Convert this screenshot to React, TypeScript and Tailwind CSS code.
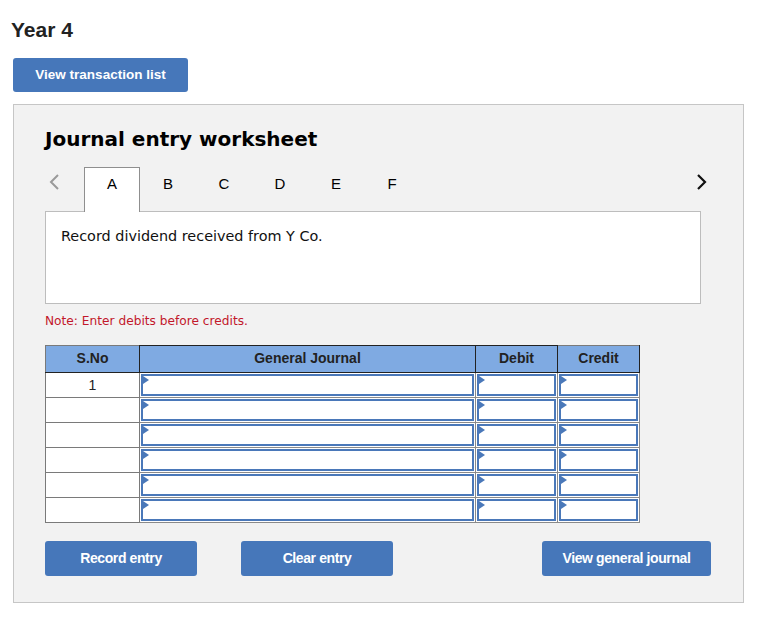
import React from 'react';

const tabs = ['A', 'B', 'C', 'D', 'E', 'F'];
const rows = [1, 2, 3, 4, 5, 6];

function Flag() {
  return (
    <svg className="absolute left-0 top-0" width="6" height="8" viewBox="0 0 6 8">
      <path d="M0 0 L6 4 L0 8 Z" fill="#4a78b9" />
    </svg>
  );
}

function InputCell({ width }: { width: string }) {
  return (
    <td className={`${width} h-[25px] p-0 border border-[#8a8a8a] bg-white`}>
      <div className="relative h-[22px] mx-[1px] border-2 border-[#4a78b9] bg-white">
        <Flag />
      </div>
    </td>
  );
}

export default function App() {
  return (
    <div className="w-[776px] h-[620px] bg-white pt-[17px] font-['Liberation_Sans',Arial,sans-serif]">
      <h1 className="pl-[11px] text-[21px] leading-[26px] font-bold text-[#222]">Year 4</h1>

      <button className="ml-[13px] mt-[15px] w-[175px] h-[34px] rounded-[3px] bg-[#4677ba] text-white text-[13.5px] font-bold">
        View transaction list
      </button>

      <div className="ml-[13px] mt-[12px] w-[731px] h-[499px] border border-[#c6c6c6] bg-[#f2f2f2] pl-[31px] pt-[21px]">
        <h2 className="text-[20px] leading-[26px] font-bold text-black font-['DejaVu_Sans',Verdana,sans-serif]">
          Journal entry worksheet
        </h2>

        <div className="mt-[15px] flex items-end h-[44px] w-[667px]">
          <span className="w-[39px] h-[44px] flex items-start pt-[6px] pl-[3px]">
            <svg width="12" height="18" viewBox="0 0 12 18">
              <path d="M10 2 L3 9 L10 16" fill="none" stroke="#9a9a9a" strokeWidth="2" />
            </svg>
          </span>
          {tabs.map((t, i) => (
            <div
              key={t}
              className={
                i === 0
                  ? 'w-[56px] h-[45px] -mb-[1px] relative z-10 border border-[#8f8f8f] border-b-0 bg-white flex justify-center pt-[5px] text-[15px] text-black'
                  : 'w-[56px] h-[44px] flex justify-center pt-[6px] text-[15px] text-black'
              }
            >
              {t}
            </div>
          ))}
          <span className="ml-auto w-[16px] h-[44px] flex items-start pt-[6px]">
            <svg width="12" height="18" viewBox="0 0 12 18">
              <path d="M2 2 L9 9 L2 16" fill="none" stroke="#111" strokeWidth="2.2" />
            </svg>
          </span>
        </div>

        <div className="w-[656px] h-[93px] border border-[#bdbdbd] bg-white pl-[15px] pt-[15px] text-[14.4px] leading-[18px] text-[#111] font-['DejaVu_Sans',Verdana,sans-serif]">
          Record dividend received from Y Co.
        </div>

        <p className="mt-[9px] text-[12.2px] leading-[16px] text-[#c2182b] font-['DejaVu_Sans',Verdana,sans-serif]">
          Note: Enter debits before credits.
        </p>

        <table className="mt-[16px] border-collapse border border-[#7a7a7a] text-[14px]">
          <thead>
            <tr className="h-[27px] bg-[#7faae2] text-[#222] font-bold">
              <th className="w-[94px] border border-[#7a7a7a] border-r-[#222] border-b-[#222] font-bold pb-[2px]">S.No</th>
              <th className="w-[336px] border border-[#222] font-bold pb-[2px]">General Journal</th>
              <th className="w-[82px] border border-[#222] font-bold pb-[2px]">Debit</th>
              <th className="w-[82px] border border-[#222] border-t-[#7a7a7a] font-bold pb-[2px]">Credit</th>
            </tr>
          </thead>
          <tbody>
            {rows.map((r) => (
              <tr key={r}>
                <td className="w-[94px] h-[25px] p-0 border border-[#7a7a7a] bg-white text-center text-[14px] text-[#222] align-top pt-[2px]">
                  {r === 1 ? '1' : ''}
                </td>
                <InputCell width="w-[336px]" />
                <InputCell width="w-[82px]" />
                <InputCell width="w-[82px]" />
              </tr>
            ))}
          </tbody>
        </table>

        <div className="mt-[18px] flex w-[666px]">
          <button className="w-[152px] h-[35px] rounded-[3px] bg-[#4677ba] text-white text-[14px] font-bold tracking-[-0.4px]">
            Record entry
          </button>
          <button className="ml-[44px] w-[152px] h-[35px] rounded-[3px] bg-[#4677ba] text-white text-[14px] font-bold tracking-[-0.4px]">
            Clear entry
          </button>
          <button className="ml-auto w-[169px] h-[35px] rounded-[3px] bg-[#4677ba] text-white text-[14px] font-bold tracking-[-0.4px]">
            View general journal
          </button>
        </div>
      </div>
    </div>
  );
}
